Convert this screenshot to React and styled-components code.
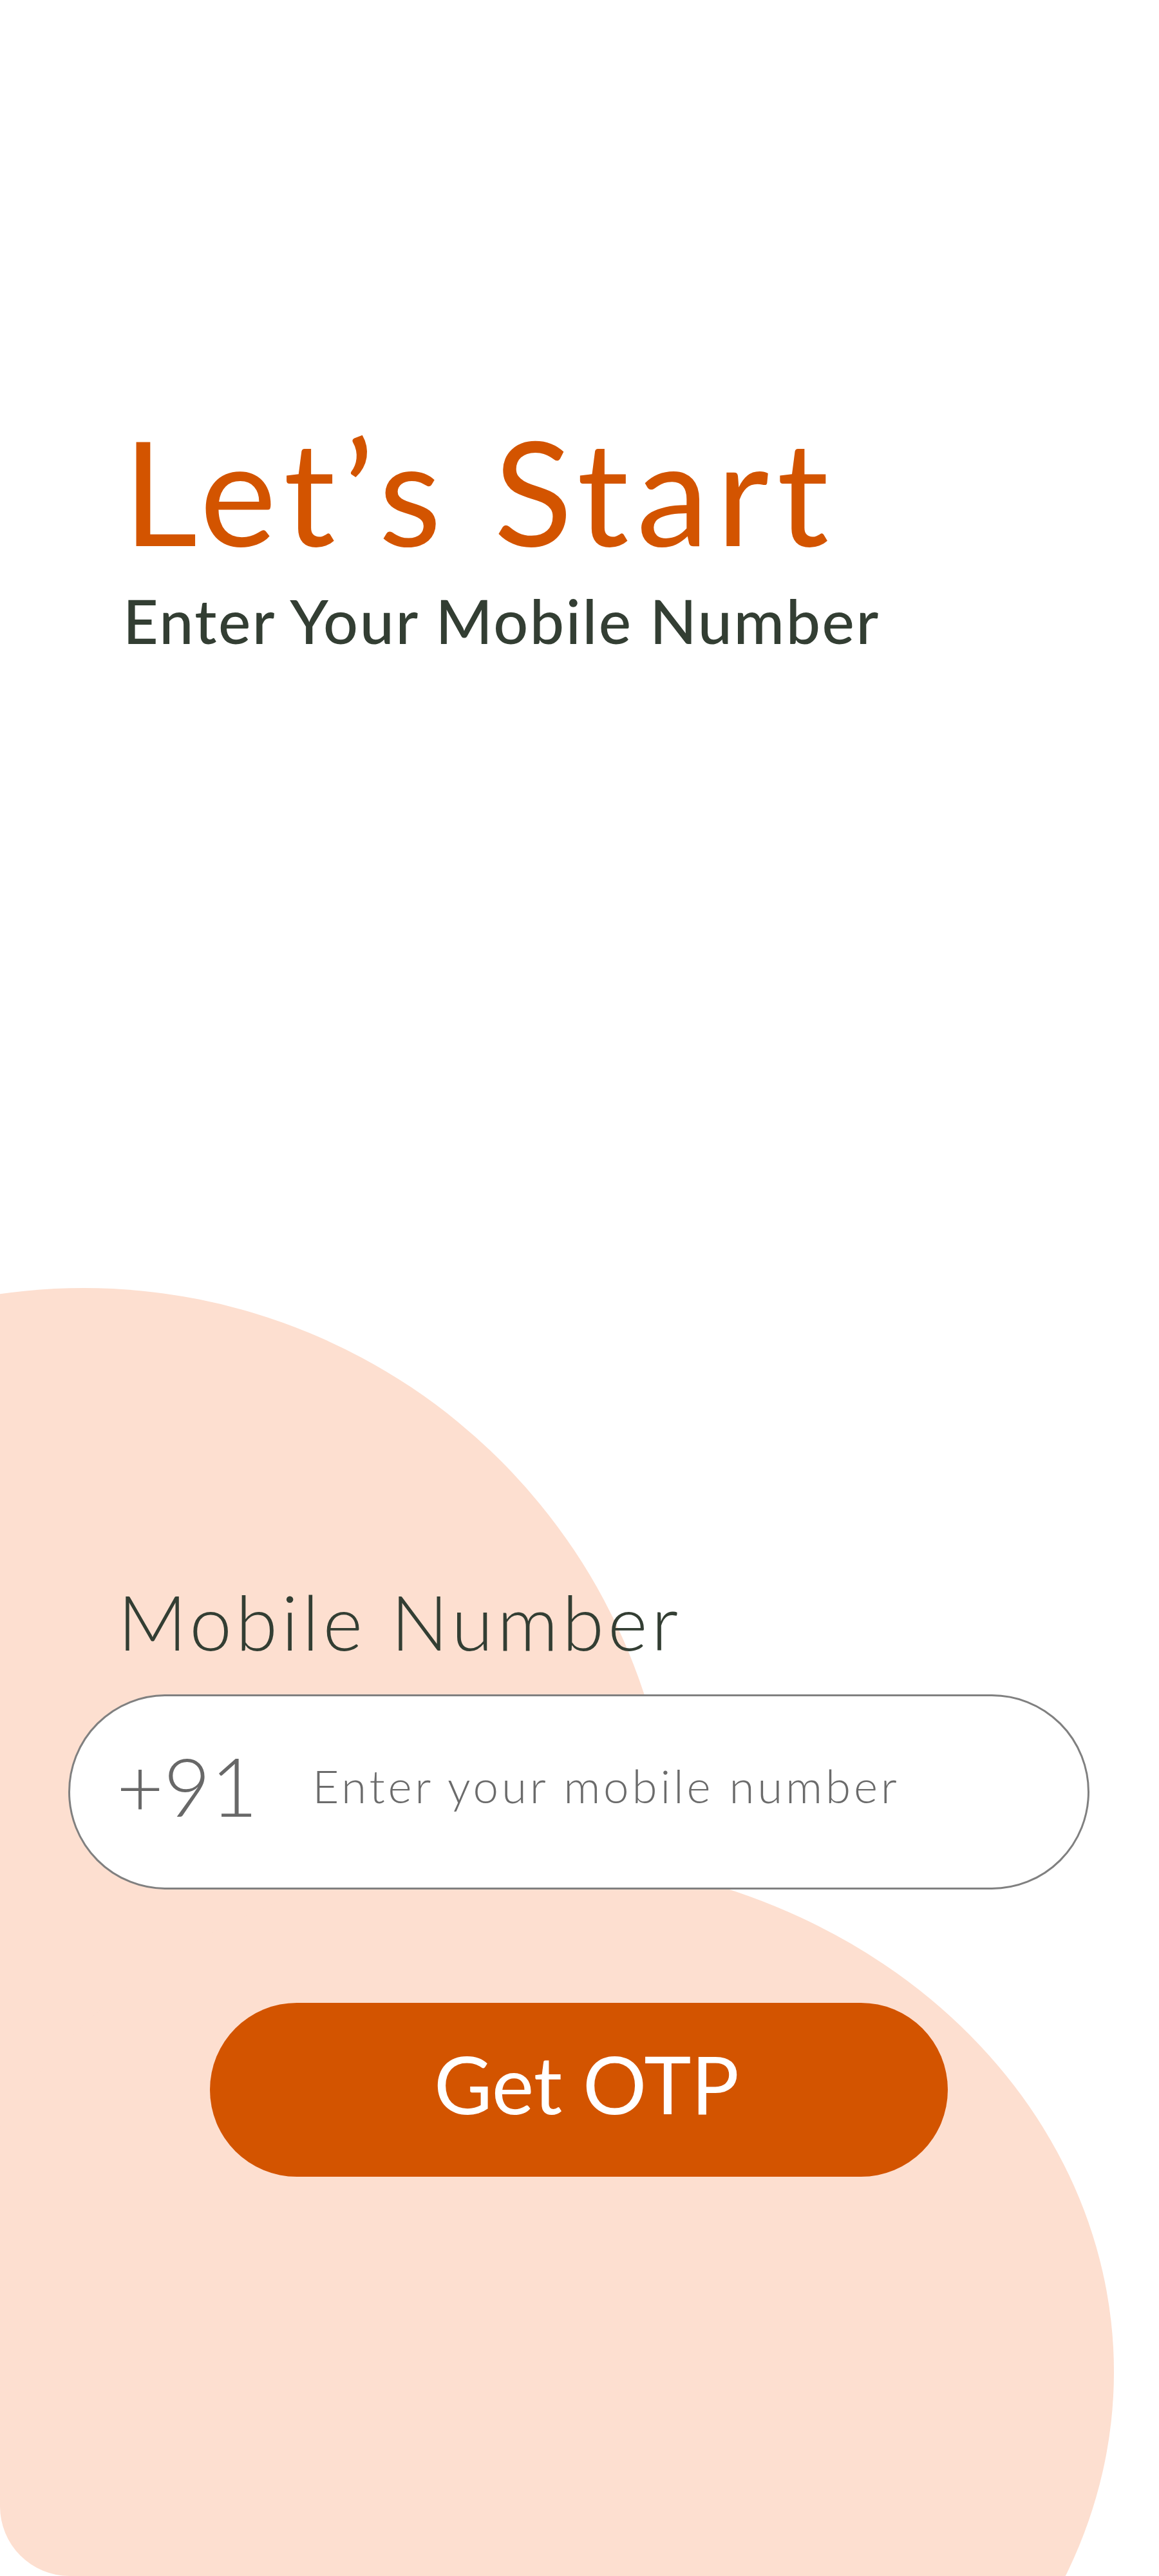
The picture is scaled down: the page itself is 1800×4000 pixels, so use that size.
import React from "react";
import styled, { createGlobalStyle } from "styled-components";

const GlobalStyle = createGlobalStyle`
  * {
    box-sizing: border-box;
  }
  body {
    margin: 0;
    background: #ffffff;
    font-family: "Lato", "Open Sans", sans-serif;
  }
`;

const Login = () => {
  return (
    <Screen>
      <GlobalStyle />
      <Decor>
        <Blob $top={0} $left={-786} $w={1832} $h={1832} />
        <Blob $top={883} $left={-110} $w={1840} $h={1600} />
      </Decor>

      <Header>
        <Title>Let’s Start</Title>
        <Subtitle>Enter Your Mobile Number</Subtitle>
      </Header>

      <Form>
        <Label htmlFor="mobile">Mobile Number</Label>
        <Field>
          <Code>+91</Code>
          <Input id="mobile" type="tel" placeholder="Enter your mobile number" />
        </Field>
        <Button type="button">Get OTP</Button>
      </Form>
    </Screen>
  );
};

const Screen = styled.div`
  position: relative;
  width: 1800px;
  height: 4000px;
  overflow: hidden;
  background: #ffffff;
  display: flex;
  flex-direction: column;
`;

const Decor = styled.div`
  position: absolute;
  left: 0;
  top: 2000px;
  width: 1800px;
  height: 2000px;
  overflow: hidden;
  border-bottom-left-radius: 108px;
  z-index: 0;
`;

const Blob = styled.div`
  position: absolute;
  top: ${(p) => p.$top}px;
  left: ${(p) => p.$left}px;
  width: ${(p) => p.$w}px;
  height: ${(p) => p.$h}px;
  border-radius: 50%;
  background: #fddfd0;
`;

const Header = styled.div`
  position: relative;
  z-index: 1;
  display: flex;
  flex-direction: column;
  padding: 649px 0 0 183px;
`;

const Title = styled.h1`
  margin: 0 0 0 8px;
  font-size: 225px;
  line-height: 1;
  font-weight: 400;
  letter-spacing: 12px;
  color: #d35400;
`;

const Subtitle = styled.p`
  margin: 42px 0 0 8px;
  font-size: 95px;
  line-height: 1;
  font-weight: 500;
  letter-spacing: 2.6px;
  color: #333e33;
`;

const Form = styled.div`
  position: relative;
  z-index: 1;
  display: flex;
  flex-direction: column;
  margin-top: 1448px;
  padding: 0 108px 0 106px;
`;

const Label = styled.label`
  margin-left: 77px;
  font-size: 118px;
  line-height: 1;
  font-weight: 300;
  letter-spacing: 6px;
  color: #333e33;
`;

const Field = styled.div`
  display: flex;
  align-items: center;
  margin-top: 54px;
  height: 303px;
  padding: 0 90px 20px 72px;
  background: #ffffff;
  border: 3px solid #808080;
  border-radius: 152px;
`;

const Code = styled.span`
  font-size: 126px;
  line-height: 1;
  font-weight: 300;
  color: #686868;
`;

const Input = styled.input`
  flex: 1;
  min-width: 0;
  margin-left: 85px;
  padding: 0;
  border: none;
  outline: none;
  background: transparent;
  font-family: "Lato", "Open Sans", sans-serif;
  font-size: 71px;
  line-height: 1;
  font-weight: 300;
  letter-spacing: 4.8px;
  color: #333333;

  &::placeholder {
    color: #6b6b6b;
    opacity: 1;
  }
`;

const Button = styled.button`
  align-self: center;
  width: 1146px;
  height: 270px;
  margin-top: 176px;
  padding: 0 0 20px 24px;
  border: none;
  border-radius: 135px;
  background: #d35400;
  color: #ffffff;
  font-family: "Lato", "Open Sans", sans-serif;
  font-size: 124px;
  line-height: 1;
  font-weight: 400;
  cursor: pointer;
`;

export default Login;
